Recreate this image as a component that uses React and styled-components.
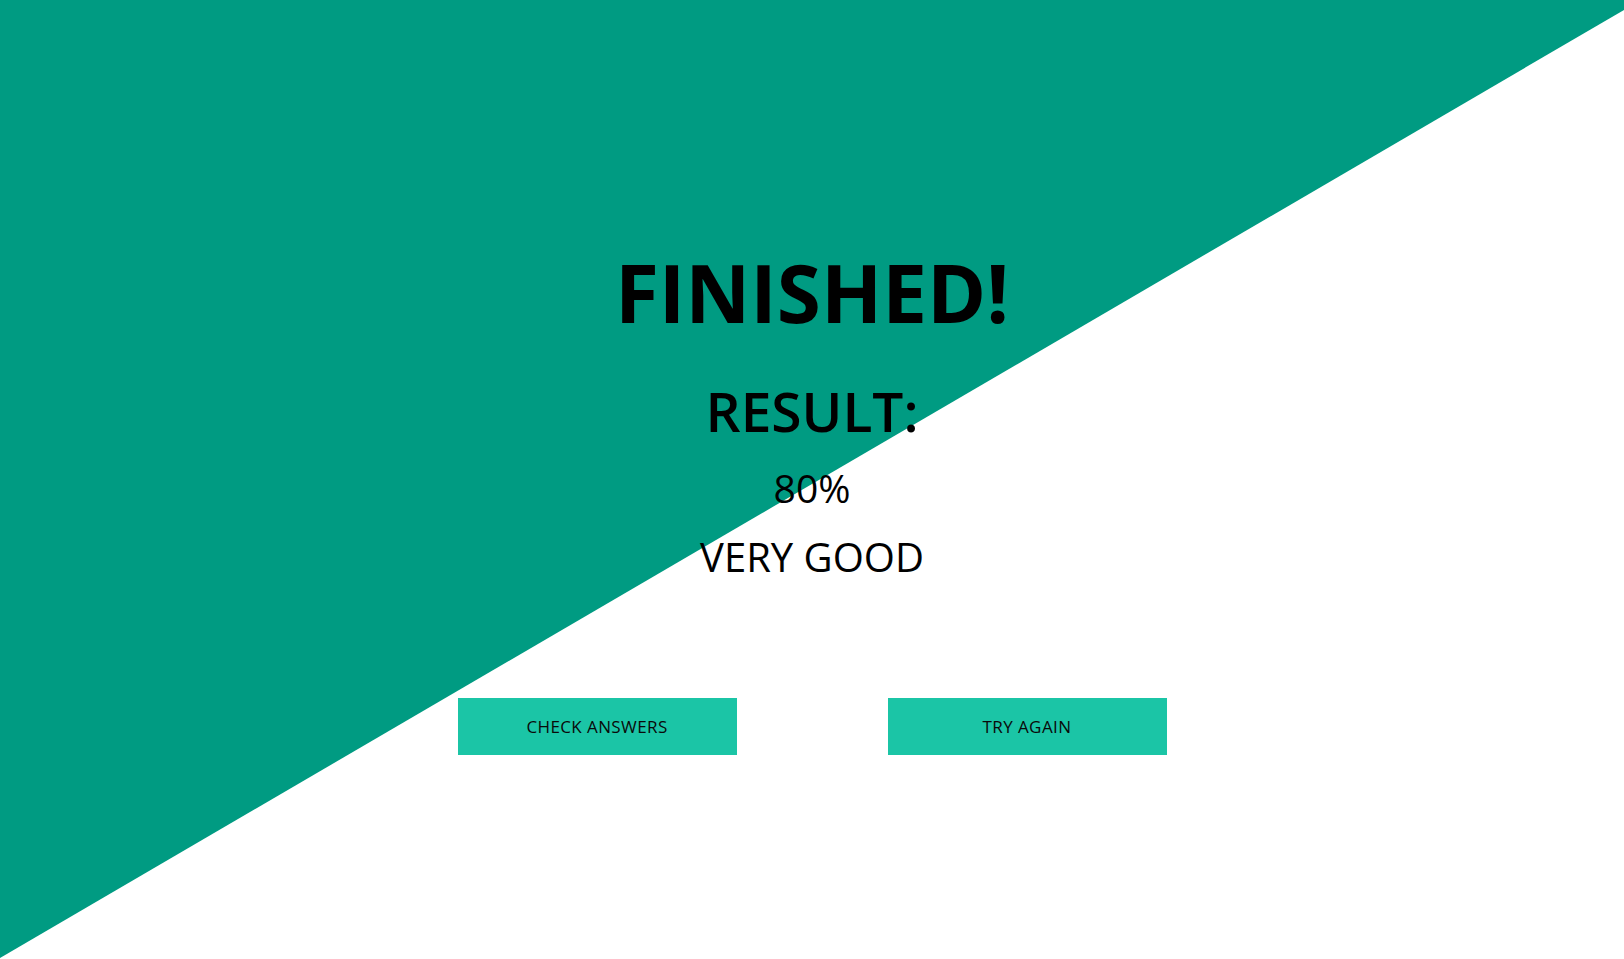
import React from "react";
import styled, { createGlobalStyle } from "styled-components";

const Global = createGlobalStyle`
  html, body { margin: 0; padding: 0; }
  body {
    font-family: "Open Sans", "Liberation Sans", sans-serif;
    background: #ffffff;
    color: #000;
  }
`;

const Page = styled.div`
  position: relative;
  width: 100%;
  height: 959px;
  overflow: hidden;
  background: #ffffff;
`;

const Wedge = styled.div`
  position: absolute;
  inset: 0;
  background: #009b82;
  clip-path: polygon(0 0, 100% 0, 100% 10px, 0 958px);
  z-index: 0;
`;

const Content = styled.main`
  position: relative;
  z-index: 1;
  display: flex;
  flex-direction: column;
  align-items: center;
  padding-top: 252px;
`;

const Title = styled.h1`
  margin: 0;
  font-size: 80px;
  line-height: 80px;
  font-weight: 700;
`;

const Subtitle = styled.h2`
  margin: 51px 0 0;
  font-size: 55px;
  line-height: 55px;
  font-weight: 600;
`;

const Line = styled.p`
  margin: ${(p) => p.$gap}px 0 0;
  font-size: ${(p) => p.$size}px;
  line-height: ${(p) => p.$size}px;
  font-weight: 400;
`;

const Actions = styled.div`
  display: flex;
  gap: 151px;
  margin-top: 121px;
`;

const Button = styled.button`
  width: 279px;
  height: 57px;
  border: none;
  background: #1bc5a6;
  color: #0a0a0a;
  font-family: "Open Sans", "Liberation Sans", sans-serif;
  font-size: 17px;
  letter-spacing: 0.4px;
  text-transform: uppercase;
  cursor: pointer;
  padding: 0;
`;

export default function App() {
  return (
    <>
      <Global />
      <Page>
        <Wedge />
        <Content>
          <Title>FINISHED!</Title>
          <Subtitle>RESULT:</Subtitle>
          <Line $size={39} $gap={30}>80%</Line>
          <Line $size={40} $gap={30}>VERY GOOD</Line>
          <Actions>
            <Button>Check answers</Button>
            <Button>Try again</Button>
          </Actions>
        </Content>
      </Page>
    </>
  );
}
